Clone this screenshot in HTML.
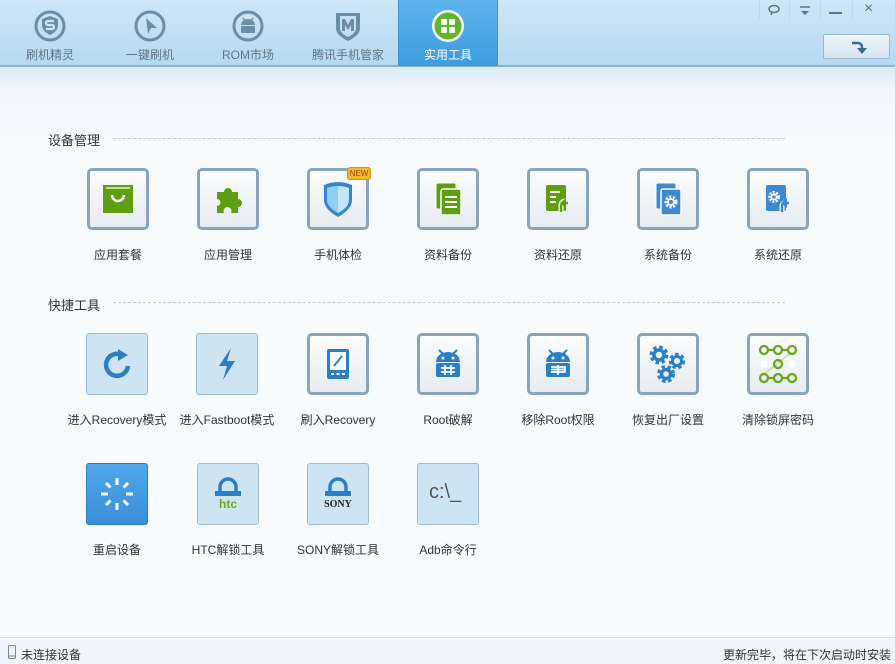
<!DOCTYPE html>
<html><head><meta charset="utf-8"><style>
*{margin:0;padding:0;box-sizing:border-box}
body{width:895px;height:664px;overflow:hidden;position:relative;font-family:"Liberation Sans","Noto Sans CJK SC",sans-serif;font-size:12px;color:#333;background:linear-gradient(#dcecf8 67px,#eef6fc 90px,#f7fbfe 140px,#f7fbfe)}
.hdr{position:absolute;left:0;top:0;width:895px;height:67px;background:linear-gradient(#cfe7f7,#b5d9f1);border-bottom:2px solid #8fb1c8}
.tab{position:absolute;top:0;width:100px;height:66px;text-align:center;color:#5e7585;font-size:12px}
.tab svg{position:absolute;left:34px;top:10px}
.tab span{position:absolute;left:0;right:0;top:46px}
.act{background:linear-gradient(#5fb4ec,#3d9be0);color:#fff;border-left:1px solid #4a8fc5;border-right:1px solid #4a8fc5}
.sec{position:absolute;left:48px;font-size:13px;color:#333}
.line{position:absolute;left:113px;width:672px;border-top:1px dashed #c3c9cf}
.t{position:absolute;width:62px;height:62px;border-radius:5px}
.a{border:3px solid #8aa5bb;background:linear-gradient(#fbfcfd,#e6ecf1)}
.b{border:1px solid #9fbbcf;background:#cfe4f3;border-radius:3px}
.c{border:1px solid #2f7cc0;background:linear-gradient(#50a7ec,#3b8fd8);border-radius:3px}
.t svg{position:absolute;left:50%;top:50%;transform:translate(-50%,-50%)}
.l{position:absolute;width:130px;text-align:center;font-size:12px;color:#333}
.ft{position:absolute;left:0;top:637px;width:895px;height:27px;border-top:1px solid #d5dde3;background:#eef5fb;font-size:12px}
</style></head><body>
<div class="hdr">
 <div class="tab" style="left:0"><svg width="32" height="32" viewBox="0 0 32 32"><circle cx="16" cy="16" r="14" fill="none" stroke="#6c8ea4" stroke-width="3"/><path d="M16 6l8 3v6c0 5-4 8-8 10-4-2-8-5-8-10V9z" fill="#6c8ea4"/><path d="M20 11h-6a2 2 0 000 4h4a2 2 0 010 4h-6" stroke="#cde6f6" stroke-width="2.2" fill="none"/></svg><span>刷机精灵</span></div>
 <div class="tab" style="left:100px"><svg width="32" height="32" viewBox="0 0 32 32"><circle cx="16" cy="16" r="14" fill="none" stroke="#6c8ea4" stroke-width="3"/><path d="M12 8l11 10h-6l-3 6z" fill="#6c8ea4"/></svg><span>一键刷机</span></div>
 <div class="tab" style="left:198px"><svg width="32" height="32" viewBox="0 0 32 32"><circle cx="16" cy="16" r="14" fill="none" stroke="#6c8ea4" stroke-width="3"/><path d="M9 15a7 6 0 0114 0z" fill="#6c8ea4"/><rect x="9" y="16" width="14" height="7" rx="1" fill="#6c8ea4"/><path d="M11 8l2 3M21 8l-2 3" stroke="#6c8ea4" stroke-width="1.5"/></svg><span>ROM市场</span></div>
 <div class="tab" style="left:298px"><svg width="32" height="32" viewBox="0 0 32 32"><path d="M4 3h24v15c0 6-6 10-12 13C10 28 4 24 4 18z" fill="#6c8ea4"/><path d="M8 6h16v12c0 4-4 7-8 9-4-2-8-5-8-9z" fill="#c5def0"/><path d="M10 21V9h3l3 6 3-6h3v12h-3v-6l-3 5-3-5v6z" fill="#6c8ea4"/></svg><span>腾讯手机管家</span></div>
 <div class="tab act" style="left:398px"><svg width="34" height="34" viewBox="0 0 34 34" style="left:32px;top:9px"><circle cx="17" cy="17" r="16" fill="#fff"/><circle cx="17" cy="17" r="13.5" fill="#5cb82a"/><rect x="10" y="10" width="6" height="6" rx="1" fill="#fff"/><rect x="18" y="10" width="6" height="6" rx="1" fill="#fff"/><rect x="10" y="18" width="6" height="6" rx="1" fill="#fff"/><rect x="18" y="18" width="6" height="6" rx="1" fill="#fff"/></svg><span>实用工具</span></div>
 <div style="position:absolute;left:759px;top:0;width:1px;height:20px;background:#c2d8e6"></div>
 <div style="position:absolute;left:789px;top:0;width:1px;height:20px;background:#c2d8e6"></div>
 <div style="position:absolute;left:820px;top:0;width:1px;height:20px;background:#c2d8e6"></div>
 <div style="position:absolute;left:852px;top:0;width:1px;height:20px;background:#c2d8e6"></div>
 <svg style="position:absolute;left:766px;top:3px" width="16" height="14"><ellipse cx="8" cy="6" rx="5" ry="3.5" fill="none" stroke="#5b7585" stroke-width="1.5"/><path d="M6 9l-1 3" stroke="#5b7585" stroke-width="1.5"/></svg>
 <svg style="position:absolute;left:797px;top:4px" width="16" height="14"><path d="M3 3h10" stroke="#5b7585" stroke-width="1.5"/><path d="M4 7h8l-4 4z" fill="#5b7585"/></svg>
 <div style="position:absolute;left:829px;top:12px;width:13px;height:2px;background:#5b7585"></div>
 <div style="position:absolute;left:864px;top:0;font-size:16px;color:#5b7585">×</div>
 <div style="position:absolute;left:823px;top:34px;width:67px;height:25px;border:1px solid #9fb7c8;border-radius:2px;background:linear-gradient(#eef6fb,#d2e5f1)"><svg style="position:absolute;left:25px;top:3px" width="18" height="18" viewBox="0 0 18 18"><path d="M3 5h6a4 4 0 014 4v2" fill="none" stroke="#3a6b8a" stroke-width="2.5"/><path d="M8 10h10l-5 6z" fill="#3a6b8a"/></svg></div>
</div>

<div class="sec" style="top:130px">设备管理</div><div class="line" style="top:138px"></div>
<div class="sec" style="top:295px">快捷工具</div><div class="line" style="top:302px"></div>

<div class="t a" style="left:87px;top:168px"><svg width="34" height="30" viewBox="0 0 34 30"><rect x="2" y="1" width="30" height="28" fill="#5e9e10"/><path d="M5 4h24" stroke="#fff" stroke-width="1.2"/><path d="M11 11a6 6 0 0012 0" fill="none" stroke="#fff" stroke-width="2.5"/></svg></div>
<div class="l" style="left:53px;top:246px">应用套餐</div>
<div class="t a" style="left:197px;top:168px"><svg width="34" height="34" viewBox="0 0 34 34"><path d="M6 10h7a4 4 0 118 0h6v7a4 4 0 110 8v6h-7a4 4 0 10-7 0H6v-7a3.5 3.5 0 100-7z" fill="#5e9e10"/></svg></div>
<div class="l" style="left:163px;top:246px">应用管理</div>
<div class="t a" style="left:307px;top:168px"><svg width="34" height="38" viewBox="0 0 34 38"><path d="M3 5q14-6 28 0v15q0 9-14 17Q3 29 3 20z" fill="#2f88d1"/><path d="M6 8q11-4 22 0v12q0 7-11 13Q6 27 6 20z" fill="#8fd0f6"/><path d="M17 6q6 0 11 2v12q0 7-11 13z" fill="#c4e6fa"/></svg><div style="position:absolute;left:37px;top:-4px;width:24px;height:13px;border-radius:3px;background:#f5b82a;border:1px solid #d69412;color:#a04a00;font-size:8px;line-height:11px;text-align:center">NEW</div></div>
<div class="l" style="left:273px;top:246px">手机体检</div>
<div class="t a" style="left:417px;top:168px"><svg width="34" height="36" viewBox="0 0 34 36"><rect x="5" y="2" width="20" height="26" rx="2" fill="#5e9e10" stroke="#fbfcfd" stroke-width="1"/><rect x="10" y="8" width="20" height="26" rx="2" fill="#5e9e10" stroke="#fbfcfd" stroke-width="1.5"/><path d="M14 16h12M14 21h12M14 26h12" stroke="#fff" stroke-width="2"/></svg></div>
<div class="l" style="left:383px;top:246px">资料备份</div>
<div class="t a" style="left:527px;top:168px"><svg width="34" height="34" viewBox="0 0 34 34"><rect x="5" y="3" width="20" height="26" rx="2" fill="#5e9e10"/><path d="M9 10h10M9 15h6M9 20h6" stroke="#fff" stroke-width="2"/><path d="M20 29v-6a4 4 0 014-4h3" fill="none" stroke="#fbfcfd" stroke-width="5"/><path d="M20 30v-6a3 3 0 013-3h4" fill="none" stroke="#5e9e10" stroke-width="2.5"/><path d="M19 21l6-5v10z" fill="#5e9e10"/></svg></div>
<div class="l" style="left:493px;top:246px">资料还原</div>
<div class="t a" style="left:637px;top:168px"><svg width="34" height="36" viewBox="0 0 34 36"><rect x="5" y="2" width="20" height="26" rx="2" fill="#3b8ad0" stroke="#fbfcfd"/><rect x="10" y="8" width="20" height="26" rx="2" fill="#3b8ad0" stroke="#fbfcfd" stroke-width="1.5"/><circle cx="20" cy="21" r="5" fill="none" stroke="#fff" stroke-width="3" stroke-dasharray="2.2 1.4"/><circle cx="20" cy="21" r="3" fill="none" stroke="#fff" stroke-width="1.6"/></svg></div>
<div class="l" style="left:603px;top:246px">系统备份</div>
<div class="t a" style="left:747px;top:168px"><svg width="34" height="34" viewBox="0 0 34 34"><rect x="5" y="3" width="20" height="26" rx="2" fill="#3b8ad0"/><circle cx="13" cy="15" r="4.5" fill="none" stroke="#fff" stroke-width="3" stroke-dasharray="2 1.3"/><circle cx="13" cy="15" r="2.5" fill="none" stroke="#fff" stroke-width="1.5"/><path d="M21 30v-6a3 3 0 013-3h4" fill="none" stroke="#fbfcfd" stroke-width="5"/><path d="M21 30v-6a3 3 0 013-3h4" fill="none" stroke="#3b8ad0" stroke-width="2.5"/><path d="M20 21l6-5v10z" fill="#3b8ad0"/></svg></div>
<div class="l" style="left:713px;top:246px">系统还原</div>

<div class="t b" style="left:86px;top:333px"><svg width="34" height="34" viewBox="0 0 34 34"><path d="M22 8A11 11 0 1028 19" fill="none" stroke="#2a7fc6" stroke-width="4.5"/><path d="M18 2l10 6-10 6z" fill="#2a7fc6"/></svg></div>
<div class="l" style="left:52px;top:411px">进入Recovery模式</div>
<div class="t b" style="left:196px;top:333px"><svg width="30" height="36" viewBox="0 0 30 36"><path d="M19 2L7 20h8l-4 14 12-19h-8z" fill="#2a7fc6"/></svg></div>
<div class="l" style="left:162px;top:411px">进入Fastboot模式</div>
<div class="t a" style="left:307px;top:333px"><svg width="26" height="34" viewBox="0 0 26 34"><rect x="2" y="2" width="22" height="30" rx="2" fill="#2a7fc6"/><rect x="5" y="5" width="16" height="18" fill="#fbfcfd"/><path d="M9 19l8-10" stroke="#2a7fc6" stroke-width="2"/><path d="M6 27h3M11.5 27h3M17 27h3" stroke="#fff" stroke-width="2"/></svg></div>
<div class="l" style="left:273px;top:411px">刷入Recovery</div>
<div class="t a" style="left:417px;top:333px"><svg width="34" height="34" viewBox="0 0 34 34"><path d="M5 15a12 10 0 0124 0z" fill="#2a7fc6"/><path d="M8 3l5 5M26 3l-5 5" stroke="#2a7fc6" stroke-width="2"/><circle cx="12" cy="11" r="1.5" fill="#fff"/><circle cx="22" cy="11" r="1.5" fill="#fff"/><rect x="5" y="16" width="24" height="14" rx="2" fill="#2a7fc6"/><path d="M10 21h14M10 25h14M14 18v10M20 18v10" stroke="#fff" stroke-width="1.8"/></svg></div>
<div class="l" style="left:383px;top:411px">Root破解</div>
<div class="t a" style="left:527px;top:333px"><svg width="34" height="34" viewBox="0 0 34 34"><path d="M5 15a12 10 0 0124 0z" fill="#2a7fc6"/><path d="M8 3l5 5M26 3l-5 5" stroke="#2a7fc6" stroke-width="2"/><circle cx="12" cy="11" r="1.5" fill="#fff"/><circle cx="22" cy="11" r="1.5" fill="#fff"/><rect x="5" y="16" width="24" height="14" rx="2" fill="#2a7fc6"/><path d="M10 20h14v5H10M10 22.5h14M17 18v10" stroke="#fff" stroke-width="1.8" fill="none"/></svg></div>
<div class="l" style="left:493px;top:411px">移除Root权限</div>
<div class="t a" style="left:637px;top:333px"><svg width="44" height="44" viewBox="0 0 44 44"><g fill="none" stroke="#2a7fc6"><circle cx="13" cy="13" r="7" stroke-width="5" stroke-dasharray="3 2.5"/><circle cx="13" cy="13" r="5" stroke-width="3.5"/><circle cx="31" cy="19" r="6" stroke-width="4.5" stroke-dasharray="3 2.3"/><circle cx="31" cy="19" r="4.5" stroke-width="3"/><circle cx="20" cy="32" r="6.5" stroke-width="5" stroke-dasharray="3 2.3"/><circle cx="20" cy="32" r="4.5" stroke-width="3.5"/></g></svg></div>
<div class="l" style="left:603px;top:411px">恢复出厂设置</div>
<div class="t a" style="left:747px;top:333px"><svg width="44" height="44" viewBox="0 0 44 44"><path d="M8 32L36 10" stroke="#cfe0b0" stroke-width="2"/><g fill="none" stroke="#6aa81a" stroke-width="2.3"><circle cx="8" cy="8" r="4"/><circle cx="22" cy="8" r="4"/><circle cx="36" cy="8" r="4"/><circle cx="22" cy="22" r="4"/><circle cx="8" cy="36" r="4"/><circle cx="22" cy="36" r="4"/><circle cx="36" cy="36" r="4"/><path d="M12 8h6M26 8h6M12 36h6M26 36h6"/></g><circle cx="8" cy="22" r="3.5" fill="#fff"/><circle cx="36" cy="22" r="3.5" fill="#fff"/></svg></div>
<div class="l" style="left:713px;top:411px">清除锁屏密码</div>

<div class="t c" style="left:86px;top:463px"><svg width="36" height="36" viewBox="0 0 36 36"><g stroke="#fff" stroke-width="3"><path d="M18 2v7M18 27v7M2 18h7M27 18h7M7 7l4.5 4.5M24.5 24.5L29 29M29 7l-4.5 4.5M11.5 24.5L7 29"/></g></svg></div>
<div class="l" style="left:52px;top:541px">重启设备</div>
<div class="t b" style="left:197px;top:463px"><svg width="34" height="36" viewBox="0 0 34 36"><path d="M9 15v-4a8 8 0 0116 0v4" fill="none" stroke="#2a7fc6" stroke-width="3.5"/><rect x="4" y="15" width="26" height="5" fill="#2a7fc6"/><text x="17" y="32" text-anchor="middle" font-family="Liberation Sans" font-weight="bold" font-size="12" fill="#6aa81a">htc</text></svg></div>
<div class="l" style="left:163px;top:541px">HTC解锁工具</div>
<div class="t b" style="left:307px;top:463px"><svg width="40" height="36" viewBox="0 0 40 36"><path d="M12 15v-4a8 8 0 0116 0v4" fill="none" stroke="#2a7fc6" stroke-width="3.5"/><rect x="7" y="15" width="26" height="5" fill="#2a7fc6"/><text x="20" y="31" text-anchor="middle" font-family="Liberation Serif" font-weight="bold" font-size="10" fill="#222">SONY</text></svg></div>
<div class="l" style="left:273px;top:541px">SONY解锁工具</div>
<div class="t b" style="left:417px;top:463px"><span style="position:absolute;left:11px;top:17px;font-size:20px;color:#555;font-family:'Liberation Sans'">c:\_</span></div>
<div class="l" style="left:383px;top:541px">Adb命令行</div>

<div class="ft"><svg style="position:absolute;left:8px;top:7px" width="8" height="14"><rect x="0.5" y="0.5" width="7" height="13" rx="1" fill="none" stroke="#7a8a96"/><path d="M1 11h6" stroke="#7a8a96"/></svg><span style="position:absolute;left:21px;top:8px">未连接设备</span><span style="position:absolute;right:4px;top:8px">更新完毕，将在下次启动时安装</span></div>
</body></html>
